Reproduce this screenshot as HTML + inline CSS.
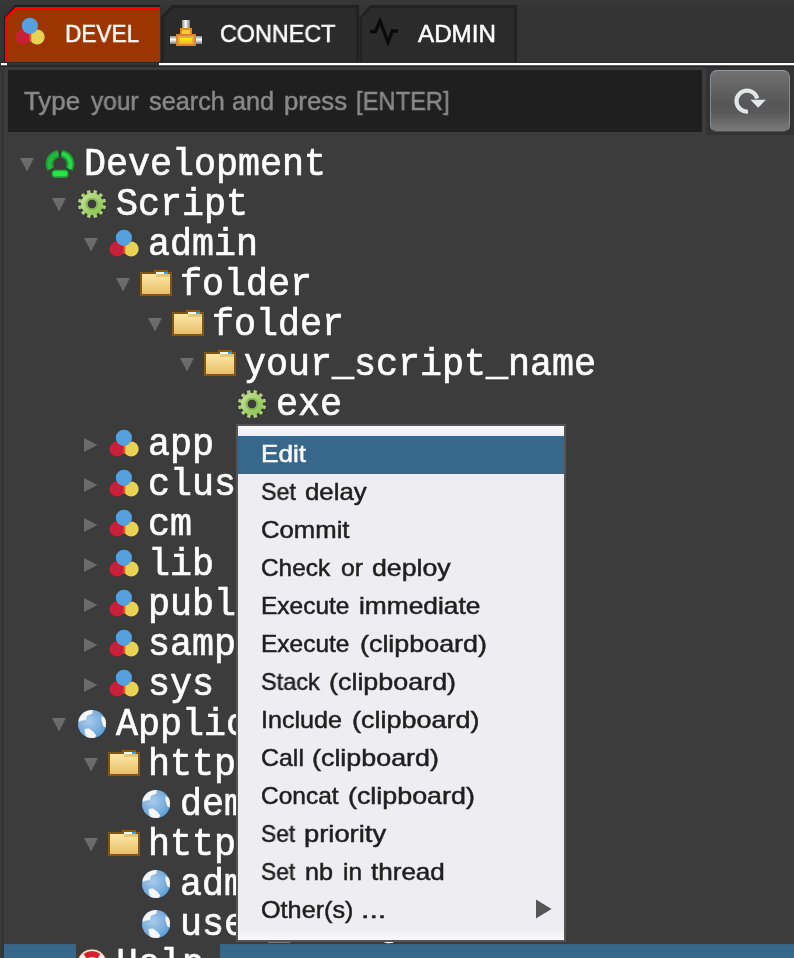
<!DOCTYPE html>
<html><head><meta charset="utf-8"><title>tree</title>
<style>
html,body{margin:0;padding:0;overflow:hidden}
#app{position:absolute;left:0;top:0;width:794px;height:958px;overflow:hidden;background:#3c3c3c}
body{width:794px;height:958px;overflow:hidden;background:#3c3c3c;position:relative;font-family:"Liberation Sans", sans-serif;}
.t{will-change:transform;position:absolute;white-space:pre;transform-origin:0 0;display:block;}
.s{font-family:"Liberation Sans", sans-serif;-webkit-text-stroke:0.5px currentColor}
.m{font-family:"Liberation Mono", monospace}
.b{filter:blur(0.45px)}
.i{position:absolute;display:block;overflow:visible}
#edge{position:absolute;left:0;top:0;width:4px;height:958px;background:#343434;border-left:1px solid #3b3b3b;box-sizing:border-box}
#menu{position:absolute;left:236px;top:424px;width:326px;height:514px;border:2px solid #555;background:linear-gradient(#fafafc 0,#ededf2 10px,#ededf2 502px,#f9f9fb 514px);}
#menu>div{position:absolute;left:0;width:326px;height:38px;}
#menu>div.sel{background:#38678c;}
#btn{position:absolute;left:710px;top:70px;width:78px;height:60px;border-radius:7px;border:1px solid #858b91;border-top-color:#949aa0;border-bottom-color:#4e5258;background:linear-gradient(#717171 0,#565656 55%,#5a5a5a 70%,#7b7b7b 100%);overflow:hidden}
</style></head><body><div id="app">
<div id="edge"></div>
<svg class="i" style="left:0;top:0" width="794" height="70" viewBox="0 0 794 70">
<rect x="0" y="0" width="794" height="70" fill="#343434"/>
<rect x="0" y="0" width="794" height="5" fill="#373737"/>
<!-- inactive tabs -->
<path d="M161 62V17L172 5H359V62z" fill="#212121"/>
<path d="M163.5 62V18L173 8H356.5V62z" fill="#2b2b2b"/>
<path d="M359.5 62V17L370.500 5H517V62z" fill="#212121"/>
<path d="M362 62V18L371.5 8H514.500V62z" fill="#2b2b2b"/>
<!-- active tab -->
<path d="M4 62V17L15 5H160V62z" fill="#1a2020"/>
<path d="M5 62V17.500L15.500 7H160V62z" fill="#ff0000"/>
<path d="M7.300 62V18.500L16.500 9.300H160V62z" fill="#9c3500"/>
<rect x="0" y="62" width="794" height="1" fill="#2a2a2a"/>
<rect x="1" y="63" width="6" height="2.500" fill="#ffffff"/>
<rect x="159" y="63" width="635" height="2.500" fill="#ffffff"/>
<rect x="0" y="65.500" width="794" height="1.500" fill="#252525"/>
<rect x="0" y="67" width="794" height="3" fill="#3a3a3a"/>
</svg>
<svg class="i b" style="left:14px;top:16px" width="32" height="32" viewBox="0 0 32 32"><circle cx="9.100" cy="21" r="7.600" fill="#c9203a"/><circle cx="23.200" cy="21" r="7.500" fill="#e8d253"/><rect x="15.400" y="16" width="1.900" height="10" rx="0.9" fill="#dc5a2c"/><circle cx="15.900" cy="9.800" r="8.100" fill="#55a0de"/></svg>
<svg class="i" style="left:168px;top:16px" width="36" height="32" viewBox="168 16 36 32">
<defs><linearGradient id="pg" x1="0" y1="0" x2="1" y2="0"><stop offset="0" stop-color="#8a8a8a"/><stop offset=".45" stop-color="#ffffff"/><stop offset="1" stop-color="#7a7a7a"/></linearGradient>
<linearGradient id="pv" x1="0" y1="0" x2="0" y2="1"><stop offset="0" stop-color="#8a8a8a"/><stop offset=".45" stop-color="#ffffff"/><stop offset="1" stop-color="#7a7a7a"/></linearGradient>
<linearGradient id="yb" x1="0" y1="0" x2="0" y2="1"><stop offset="0" stop-color="#f6f010"/><stop offset="1" stop-color="#f6b020"/></linearGradient></defs>
<rect x="182" y="20" width="8" height="8" fill="url(#pg)"/>
<rect x="170" y="36" width="6" height="8" fill="url(#pv)"/><rect x="196" y="36" width="6" height="8" fill="url(#pv)"/>
<rect x="180" y="28" width="12" height="6" fill="#e08a2c"/><rect x="182" y="30" width="8" height="4" fill="#f6cc30"/>
<rect x="176" y="34" width="20" height="12" fill="#e0842a"/><rect x="178" y="36" width="16" height="8" fill="#e8a850"/><rect x="180" y="38" width="12" height="6" fill="url(#yb)"/>
</svg>
<svg class="i" style="left:366px;top:16px" width="36" height="32" viewBox="366 16 36 32"><path d="M370 31.500H375.500L380 21L388 42L392.500 31H398" fill="none" stroke="#0a0a0a" stroke-width="3.3" stroke-linejoin="miter"/></svg>
<span class="t s" style="left:65.20px;top:22.08px;font-size:24px;line-height:24px;color:#fff;transform:scale(0.9436,1.0000);">DEVEL</span>
<span class="t s" style="left:220.30px;top:22.08px;font-size:24px;line-height:24px;color:#fff;transform:scale(0.9720,1.0000);">CONNECT</span>
<span class="t s" style="left:418.30px;top:22.08px;font-size:24px;line-height:24px;color:#fff;transform:scale(1.0080,1.0000);">ADMIN</span>
<div style="position:absolute;left:706px;top:67px;width:88px;height:68px;background:#333"></div>
<div style="position:absolute;left:8px;top:70px;width:694px;height:62px;background:#1f1f1f"></div>
<span class="t s" style="left:23.62px;top:89.44px;font-size:25px;line-height:25px;color:#888;transform:scale(1.0347,1.0000);">Type</span>
<span class="t s" style="left:91.30px;top:89.44px;font-size:25px;line-height:25px;color:#888;transform:scale(0.9767,1.0000);">your</span>
<span class="t s" style="left:148.72px;top:89.44px;font-size:25px;line-height:25px;color:#888;transform:scale(1.0102,1.0000);">search</span>
<span class="t s" style="left:232.09px;top:89.44px;font-size:25px;line-height:25px;color:#888;transform:scale(1.0089,1.0000);">and</span>
<span class="t s" style="left:283.99px;top:89.44px;font-size:25px;line-height:25px;color:#888;transform:scale(1.0320,1.0000);">press</span>
<span class="t s" style="left:355.88px;top:89.44px;font-size:25px;line-height:25px;color:#888;transform:scale(0.9499,1.0000);">[ENTER]</span>
<div id="btn"><svg width="80" height="62" viewBox="710 70 80 62" style="position:absolute;left:-1px;top:-1px"><path d="M747.9 111.5A10.5 10.5 0 1 1 757.2 98.6" fill="none" stroke="#e2e6e6" stroke-width="4.2"/><path d="M750.4 99.8H765.9L758.2 107.8z" fill="#e2e6e6"/></svg></div>
<svg class="i" style="left:20px;top:158px" width="14" height="14" viewBox="0 0 14 14"><path d="M0 0H14L7 13.5z" fill="#6b6b6b"/></svg>
<svg class="i b" style="left:44px;top:148px" width="32" height="32" viewBox="0 0 32 32"><g fill="none" stroke="#1c9f33" stroke-width="7.6"><path d="M14.36 5.63 A10.5 10.5 0 0 0 6.73 20.93"/><path d="M17.64 5.63 A10.5 10.5 0 0 1 25.27 20.93"/></g><g fill="none" stroke-width="4"><path stroke="#22bb3c" d="M14.36 5.63 A10.5 10.5 0 0 0 6.73 20.93"/><path stroke="#24d944" d="M17.64 5.63 A10.5 10.5 0 0 1 25.27 20.93"/></g><rect x="7.8" y="21.8" width="16.6" height="8" rx="3.5" fill="#1fae38"/><rect x="9" y="23.3" width="14.2" height="4.6" rx="2.2" fill="#25e648"/></svg>
<span class="t m" style="left:84.00px;top:146.14px;font-size:36.66px;line-height:36.66px;color:#fff;transform:scale(1.0000,1.0450);-webkit-text-stroke:0.65px #fff;">Development</span>
<svg class="i" style="left:52px;top:198px" width="14" height="14" viewBox="0 0 14 14"><path d="M0 0H14L7 13.5z" fill="#6b6b6b"/></svg>
<svg class="i b" style="left:76px;top:188px" width="32" height="32" viewBox="0 0 32 32"><defs><linearGradient id="gg" x1="0" y1="0" x2="1" y2="1"><stop offset="0" stop-color="#c6e39a"/><stop offset="1" stop-color="#86bf4c"/></linearGradient></defs><g fill="url(#gg)"><rect x="14.3" y="2" width="3.4" height="5" transform="rotate(15 16 16)"/><rect x="14.3" y="2" width="3.4" height="5" transform="rotate(45 16 16)"/><rect x="14.3" y="2" width="3.4" height="5" transform="rotate(75 16 16)"/><rect x="14.3" y="2" width="3.4" height="5" transform="rotate(105 16 16)"/><rect x="14.3" y="2" width="3.4" height="5" transform="rotate(135 16 16)"/><rect x="14.3" y="2" width="3.4" height="5" transform="rotate(165 16 16)"/><rect x="14.3" y="2" width="3.4" height="5" transform="rotate(195 16 16)"/><rect x="14.3" y="2" width="3.4" height="5" transform="rotate(225 16 16)"/><rect x="14.3" y="2" width="3.4" height="5" transform="rotate(255 16 16)"/><rect x="14.3" y="2" width="3.4" height="5" transform="rotate(285 16 16)"/><rect x="14.3" y="2" width="3.4" height="5" transform="rotate(315 16 16)"/><rect x="14.3" y="2" width="3.4" height="5" transform="rotate(345 16 16)"/><path fill-rule="evenodd" d="M16 5a11 11 0 1 0 0 22a11 11 0 1 0 0 -22zM16 11.5a4.5 4.5 0 1 1 0 9a4.5 4.5 0 1 1 0 -9z"/></g><circle cx="16" cy="16" r="5.5" fill="none" stroke="#7fb048" stroke-width="1.6" opacity=".8"/></svg>
<span class="t m" style="left:116.00px;top:186.14px;font-size:36.66px;line-height:36.66px;color:#fff;transform:scale(1.0000,1.0450);-webkit-text-stroke:0.65px #fff;">Script</span>
<svg class="i" style="left:84px;top:238px" width="14" height="14" viewBox="0 0 14 14"><path d="M0 0H14L7 13.5z" fill="#6b6b6b"/></svg>
<svg class="i b" style="left:108px;top:228px" width="32" height="32" viewBox="0 0 32 32"><circle cx="9.100" cy="21" r="7.600" fill="#c9203a"/><circle cx="23.200" cy="21" r="7.500" fill="#e8d253"/><rect x="15.400" y="16" width="1.900" height="10" rx="0.9" fill="#dc5a2c"/><circle cx="15.900" cy="9.800" r="8.100" fill="#55a0de"/></svg>
<span class="t m" style="left:148.00px;top:226.14px;font-size:36.66px;line-height:36.66px;color:#fff;transform:scale(1.0000,1.0450);-webkit-text-stroke:0.65px #fff;">admin</span>
<svg class="i" style="left:116px;top:278px" width="14" height="14" viewBox="0 0 14 14"><path d="M0 0H14L7 13.5z" fill="#6b6b6b"/></svg>
<svg class="i b" style="left:140px;top:267px" width="32" height="32" viewBox="0 0 32 32"><defs><linearGradient id="fg" x1="0" y1="0" x2="0" y2="1"><stop offset="0" stop-color="#fdeaa8"/><stop offset="1" stop-color="#e6bd6a"/></linearGradient></defs><rect x="14" y="3" width="14" height="4" fill="#8a5b0f"/><rect x="1" y="6" width="30" height="22" fill="url(#fg)" stroke="#83570f" stroke-width="2"/><rect x="16" y="5" width="8" height="2.2" fill="#f4f6f8"/><rect x="24" y="5" width="4" height="2.2" fill="#2aa5ee"/><rect x="16" y="7.2" width="14" height="2.6" fill="#e8c47a"/></svg>
<span class="t m" style="left:180.00px;top:266.14px;font-size:36.66px;line-height:36.66px;color:#fff;transform:scale(1.0000,1.0450);-webkit-text-stroke:0.65px #fff;">folder</span>
<svg class="i" style="left:148px;top:318px" width="14" height="14" viewBox="0 0 14 14"><path d="M0 0H14L7 13.5z" fill="#6b6b6b"/></svg>
<svg class="i b" style="left:172px;top:307px" width="32" height="32" viewBox="0 0 32 32"><defs><linearGradient id="fg" x1="0" y1="0" x2="0" y2="1"><stop offset="0" stop-color="#fdeaa8"/><stop offset="1" stop-color="#e6bd6a"/></linearGradient></defs><rect x="14" y="3" width="14" height="4" fill="#8a5b0f"/><rect x="1" y="6" width="30" height="22" fill="url(#fg)" stroke="#83570f" stroke-width="2"/><rect x="16" y="5" width="8" height="2.2" fill="#f4f6f8"/><rect x="24" y="5" width="4" height="2.2" fill="#2aa5ee"/><rect x="16" y="7.2" width="14" height="2.6" fill="#e8c47a"/></svg>
<span class="t m" style="left:212.00px;top:306.14px;font-size:36.66px;line-height:36.66px;color:#fff;transform:scale(1.0000,1.0450);-webkit-text-stroke:0.65px #fff;">folder</span>
<svg class="i" style="left:180px;top:358px" width="14" height="14" viewBox="0 0 14 14"><path d="M0 0H14L7 13.5z" fill="#6b6b6b"/></svg>
<svg class="i b" style="left:204px;top:347px" width="32" height="32" viewBox="0 0 32 32"><defs><linearGradient id="fg" x1="0" y1="0" x2="0" y2="1"><stop offset="0" stop-color="#fdeaa8"/><stop offset="1" stop-color="#e6bd6a"/></linearGradient></defs><rect x="14" y="3" width="14" height="4" fill="#8a5b0f"/><rect x="1" y="6" width="30" height="22" fill="url(#fg)" stroke="#83570f" stroke-width="2"/><rect x="16" y="5" width="8" height="2.2" fill="#f4f6f8"/><rect x="24" y="5" width="4" height="2.2" fill="#2aa5ee"/><rect x="16" y="7.2" width="14" height="2.6" fill="#e8c47a"/></svg>
<span class="t m" style="left:244.00px;top:346.14px;font-size:36.66px;line-height:36.66px;color:#fff;transform:scale(1.0000,1.0450);-webkit-text-stroke:0.65px #fff;">your_script_name</span>
<svg class="i b" style="left:236px;top:388px" width="32" height="32" viewBox="0 0 32 32"><defs><linearGradient id="gg" x1="0" y1="0" x2="1" y2="1"><stop offset="0" stop-color="#c6e39a"/><stop offset="1" stop-color="#86bf4c"/></linearGradient></defs><g fill="url(#gg)"><rect x="14.3" y="2" width="3.4" height="5" transform="rotate(15 16 16)"/><rect x="14.3" y="2" width="3.4" height="5" transform="rotate(45 16 16)"/><rect x="14.3" y="2" width="3.4" height="5" transform="rotate(75 16 16)"/><rect x="14.3" y="2" width="3.4" height="5" transform="rotate(105 16 16)"/><rect x="14.3" y="2" width="3.4" height="5" transform="rotate(135 16 16)"/><rect x="14.3" y="2" width="3.4" height="5" transform="rotate(165 16 16)"/><rect x="14.3" y="2" width="3.4" height="5" transform="rotate(195 16 16)"/><rect x="14.3" y="2" width="3.4" height="5" transform="rotate(225 16 16)"/><rect x="14.3" y="2" width="3.4" height="5" transform="rotate(255 16 16)"/><rect x="14.3" y="2" width="3.4" height="5" transform="rotate(285 16 16)"/><rect x="14.3" y="2" width="3.4" height="5" transform="rotate(315 16 16)"/><rect x="14.3" y="2" width="3.4" height="5" transform="rotate(345 16 16)"/><path fill-rule="evenodd" d="M16 5a11 11 0 1 0 0 22a11 11 0 1 0 0 -22zM16 11.5a4.5 4.5 0 1 1 0 9a4.5 4.5 0 1 1 0 -9z"/></g><circle cx="16" cy="16" r="5.5" fill="none" stroke="#7fb048" stroke-width="1.6" opacity=".8"/></svg>
<span class="t m" style="left:276.00px;top:386.14px;font-size:36.66px;line-height:36.66px;color:#fff;transform:scale(1.0000,1.0450);-webkit-text-stroke:0.65px #fff;">exe</span>
<svg class="i" style="left:84px;top:438px" width="14" height="14" viewBox="0 0 14 14"><path d="M0 0V14L13.5 7z" fill="#6b6b6b"/></svg>
<svg class="i b" style="left:108px;top:428px" width="32" height="32" viewBox="0 0 32 32"><circle cx="9.100" cy="21" r="7.600" fill="#c9203a"/><circle cx="23.200" cy="21" r="7.500" fill="#e8d253"/><rect x="15.400" y="16" width="1.900" height="10" rx="0.9" fill="#dc5a2c"/><circle cx="15.900" cy="9.800" r="8.100" fill="#55a0de"/></svg>
<span class="t m" style="left:148.00px;top:426.14px;font-size:36.66px;line-height:36.66px;color:#fff;transform:scale(1.0000,1.0450);-webkit-text-stroke:0.65px #fff;">app</span>
<svg class="i" style="left:84px;top:478px" width="14" height="14" viewBox="0 0 14 14"><path d="M0 0V14L13.5 7z" fill="#6b6b6b"/></svg>
<svg class="i b" style="left:108px;top:468px" width="32" height="32" viewBox="0 0 32 32"><circle cx="9.100" cy="21" r="7.600" fill="#c9203a"/><circle cx="23.200" cy="21" r="7.500" fill="#e8d253"/><rect x="15.400" y="16" width="1.900" height="10" rx="0.9" fill="#dc5a2c"/><circle cx="15.900" cy="9.800" r="8.100" fill="#55a0de"/></svg>
<span class="t m" style="left:148.00px;top:466.14px;font-size:36.66px;line-height:36.66px;color:#fff;transform:scale(1.0000,1.0450);-webkit-text-stroke:0.65px #fff;">cluster</span>
<svg class="i" style="left:84px;top:518px" width="14" height="14" viewBox="0 0 14 14"><path d="M0 0V14L13.5 7z" fill="#6b6b6b"/></svg>
<svg class="i b" style="left:108px;top:508px" width="32" height="32" viewBox="0 0 32 32"><circle cx="9.100" cy="21" r="7.600" fill="#c9203a"/><circle cx="23.200" cy="21" r="7.500" fill="#e8d253"/><rect x="15.400" y="16" width="1.900" height="10" rx="0.9" fill="#dc5a2c"/><circle cx="15.900" cy="9.800" r="8.100" fill="#55a0de"/></svg>
<span class="t m" style="left:148.00px;top:506.14px;font-size:36.66px;line-height:36.66px;color:#fff;transform:scale(1.0000,1.0450);-webkit-text-stroke:0.65px #fff;">cm</span>
<svg class="i" style="left:84px;top:558px" width="14" height="14" viewBox="0 0 14 14"><path d="M0 0V14L13.5 7z" fill="#6b6b6b"/></svg>
<svg class="i b" style="left:108px;top:548px" width="32" height="32" viewBox="0 0 32 32"><circle cx="9.100" cy="21" r="7.600" fill="#c9203a"/><circle cx="23.200" cy="21" r="7.500" fill="#e8d253"/><rect x="15.400" y="16" width="1.900" height="10" rx="0.9" fill="#dc5a2c"/><circle cx="15.900" cy="9.800" r="8.100" fill="#55a0de"/></svg>
<span class="t m" style="left:148.00px;top:546.14px;font-size:36.66px;line-height:36.66px;color:#fff;transform:scale(1.0000,1.0450);-webkit-text-stroke:0.65px #fff;">lib</span>
<svg class="i" style="left:84px;top:598px" width="14" height="14" viewBox="0 0 14 14"><path d="M0 0V14L13.5 7z" fill="#6b6b6b"/></svg>
<svg class="i b" style="left:108px;top:588px" width="32" height="32" viewBox="0 0 32 32"><circle cx="9.100" cy="21" r="7.600" fill="#c9203a"/><circle cx="23.200" cy="21" r="7.500" fill="#e8d253"/><rect x="15.400" y="16" width="1.900" height="10" rx="0.9" fill="#dc5a2c"/><circle cx="15.900" cy="9.800" r="8.100" fill="#55a0de"/></svg>
<span class="t m" style="left:148.00px;top:586.14px;font-size:36.66px;line-height:36.66px;color:#fff;transform:scale(1.0000,1.0450);-webkit-text-stroke:0.65px #fff;">public</span>
<svg class="i" style="left:84px;top:638px" width="14" height="14" viewBox="0 0 14 14"><path d="M0 0V14L13.5 7z" fill="#6b6b6b"/></svg>
<svg class="i b" style="left:108px;top:628px" width="32" height="32" viewBox="0 0 32 32"><circle cx="9.100" cy="21" r="7.600" fill="#c9203a"/><circle cx="23.200" cy="21" r="7.500" fill="#e8d253"/><rect x="15.400" y="16" width="1.900" height="10" rx="0.9" fill="#dc5a2c"/><circle cx="15.900" cy="9.800" r="8.100" fill="#55a0de"/></svg>
<span class="t m" style="left:148.00px;top:626.14px;font-size:36.66px;line-height:36.66px;color:#fff;transform:scale(1.0000,1.0450);-webkit-text-stroke:0.65px #fff;">sample</span>
<svg class="i" style="left:84px;top:678px" width="14" height="14" viewBox="0 0 14 14"><path d="M0 0V14L13.5 7z" fill="#6b6b6b"/></svg>
<svg class="i b" style="left:108px;top:668px" width="32" height="32" viewBox="0 0 32 32"><circle cx="9.100" cy="21" r="7.600" fill="#c9203a"/><circle cx="23.200" cy="21" r="7.500" fill="#e8d253"/><rect x="15.400" y="16" width="1.900" height="10" rx="0.9" fill="#dc5a2c"/><circle cx="15.900" cy="9.800" r="8.100" fill="#55a0de"/></svg>
<span class="t m" style="left:148.00px;top:666.14px;font-size:36.66px;line-height:36.66px;color:#fff;transform:scale(1.0000,1.0450);-webkit-text-stroke:0.65px #fff;">sys</span>
<svg class="i" style="left:52px;top:718px" width="14" height="14" viewBox="0 0 14 14"><path d="M0 0H14L7 13.5z" fill="#6b6b6b"/></svg>
<svg class="i b" style="left:76px;top:708px" width="32" height="32" viewBox="0 0 32 32"><defs><radialGradient id="gl" cx=".4" cy=".4" r=".7"><stop offset="0" stop-color="#aacbea"/><stop offset="1" stop-color="#5a9bd5"/></radialGradient><clipPath id="gc"><circle cx="16" cy="16" r="14"/></clipPath></defs><circle cx="16" cy="16" r="14" fill="url(#gl)"/><g clip-path="url(#gc)" fill="#f3f5f8"><path d="M2 10 L7 3 L17 1.500 L16.500 5.500 L11 8 L10 12 L6 12.500 L3 14z"/><path d="M25.500 8 L31 11 L31 20 L27.500 18.500 L25.500 13z"/><path d="M8.500 21 L13 20.500 L17 23.500 L20 27 L19 31 L11 30 L9 26z"/></g></svg>
<span class="t m" style="left:116.00px;top:706.14px;font-size:36.66px;line-height:36.66px;color:#fff;transform:scale(1.0000,1.0450);-webkit-text-stroke:0.65px #fff;">Application</span>
<svg class="i" style="left:84px;top:758px" width="14" height="14" viewBox="0 0 14 14"><path d="M0 0H14L7 13.5z" fill="#6b6b6b"/></svg>
<svg class="i b" style="left:108px;top:747px" width="32" height="32" viewBox="0 0 32 32"><defs><linearGradient id="fg" x1="0" y1="0" x2="0" y2="1"><stop offset="0" stop-color="#fdeaa8"/><stop offset="1" stop-color="#e6bd6a"/></linearGradient></defs><rect x="14" y="3" width="14" height="4" fill="#8a5b0f"/><rect x="1" y="6" width="30" height="22" fill="url(#fg)" stroke="#83570f" stroke-width="2"/><rect x="16" y="5" width="8" height="2.2" fill="#f4f6f8"/><rect x="24" y="5" width="4" height="2.2" fill="#2aa5ee"/><rect x="16" y="7.2" width="14" height="2.6" fill="#e8c47a"/></svg>
<span class="t m" style="left:148.00px;top:746.14px;font-size:36.66px;line-height:36.66px;color:#fff;transform:scale(1.0000,1.0450);-webkit-text-stroke:0.65px #fff;">http</span>
<svg class="i b" style="left:140px;top:788px" width="32" height="32" viewBox="0 0 32 32"><defs><radialGradient id="gl" cx=".4" cy=".4" r=".7"><stop offset="0" stop-color="#aacbea"/><stop offset="1" stop-color="#5a9bd5"/></radialGradient><clipPath id="gc"><circle cx="16" cy="16" r="14"/></clipPath></defs><circle cx="16" cy="16" r="14" fill="url(#gl)"/><g clip-path="url(#gc)" fill="#f3f5f8"><path d="M2 10 L7 3 L17 1.500 L16.500 5.500 L11 8 L10 12 L6 12.500 L3 14z"/><path d="M25.500 8 L31 11 L31 20 L27.500 18.500 L25.500 13z"/><path d="M8.500 21 L13 20.500 L17 23.500 L20 27 L19 31 L11 30 L9 26z"/></g></svg>
<span class="t m" style="left:180.00px;top:786.14px;font-size:36.66px;line-height:36.66px;color:#fff;transform:scale(1.0000,1.0450);-webkit-text-stroke:0.65px #fff;">demo</span>
<svg class="i" style="left:84px;top:838px" width="14" height="14" viewBox="0 0 14 14"><path d="M0 0H14L7 13.5z" fill="#6b6b6b"/></svg>
<svg class="i b" style="left:108px;top:827px" width="32" height="32" viewBox="0 0 32 32"><defs><linearGradient id="fg" x1="0" y1="0" x2="0" y2="1"><stop offset="0" stop-color="#fdeaa8"/><stop offset="1" stop-color="#e6bd6a"/></linearGradient></defs><rect x="14" y="3" width="14" height="4" fill="#8a5b0f"/><rect x="1" y="6" width="30" height="22" fill="url(#fg)" stroke="#83570f" stroke-width="2"/><rect x="16" y="5" width="8" height="2.2" fill="#f4f6f8"/><rect x="24" y="5" width="4" height="2.2" fill="#2aa5ee"/><rect x="16" y="7.2" width="14" height="2.6" fill="#e8c47a"/></svg>
<span class="t m" style="left:148.00px;top:826.14px;font-size:36.66px;line-height:36.66px;color:#fff;transform:scale(1.0000,1.0450);-webkit-text-stroke:0.65px #fff;">http</span>
<svg class="i b" style="left:140px;top:868px" width="32" height="32" viewBox="0 0 32 32"><defs><radialGradient id="gl" cx=".4" cy=".4" r=".7"><stop offset="0" stop-color="#aacbea"/><stop offset="1" stop-color="#5a9bd5"/></radialGradient><clipPath id="gc"><circle cx="16" cy="16" r="14"/></clipPath></defs><circle cx="16" cy="16" r="14" fill="url(#gl)"/><g clip-path="url(#gc)" fill="#f3f5f8"><path d="M2 10 L7 3 L17 1.500 L16.500 5.500 L11 8 L10 12 L6 12.500 L3 14z"/><path d="M25.500 8 L31 11 L31 20 L27.500 18.500 L25.500 13z"/><path d="M8.500 21 L13 20.500 L17 23.500 L20 27 L19 31 L11 30 L9 26z"/></g></svg>
<span class="t m" style="left:180.00px;top:866.14px;font-size:36.66px;line-height:36.66px;color:#fff;transform:scale(1.0000,1.0450);-webkit-text-stroke:0.65px #fff;">admin</span>
<svg class="i b" style="left:140px;top:908px" width="32" height="32" viewBox="0 0 32 32"><defs><radialGradient id="gl" cx=".4" cy=".4" r=".7"><stop offset="0" stop-color="#aacbea"/><stop offset="1" stop-color="#5a9bd5"/></radialGradient><clipPath id="gc"><circle cx="16" cy="16" r="14"/></clipPath></defs><circle cx="16" cy="16" r="14" fill="url(#gl)"/><g clip-path="url(#gc)" fill="#f3f5f8"><path d="M2 10 L7 3 L17 1.500 L16.500 5.500 L11 8 L10 12 L6 12.500 L3 14z"/><path d="M25.500 8 L31 11 L31 20 L27.500 18.500 L25.500 13z"/><path d="M8.500 21 L13 20.500 L17 23.500 L20 27 L19 31 L11 30 L9 26z"/></g></svg>
<span class="t m" style="left:180.00px;top:906.14px;font-size:36.66px;line-height:36.66px;color:#fff;transform:scale(1.0000,1.0450);-webkit-text-stroke:0.65px #fff;">user_manager</span>
<div style="position:absolute;left:4px;top:944px;width:72px;height:40px;background:linear-gradient(#3a5f7c 0,#38678c 1px)"></div>
<div style="position:absolute;left:220px;top:944px;width:574px;height:40px;background:linear-gradient(#3a5f7c 0,#38678c 1px)"></div>
<svg class="i b" style="left:76px;top:948px" width="32" height="32" viewBox="0 0 32 32"><circle cx="16" cy="16" r="15" fill="#ececec" stroke="#6a4c1c" stroke-width="1.200"/><path d="M7.500 6 A13.500 13.500 0 0 1 24.500 6 L21 11 A7 7 0 0 0 11 11z" fill="#d8202c"/><circle cx="16" cy="16" r="6" fill="#3c3c3c"/></svg>
<span class="t m" style="left:116.00px;top:946.14px;font-size:36.66px;line-height:36.66px;color:#fff;transform:scale(1.0000,1.0450);-webkit-text-stroke:0.65px #fff;">Help</span>
<div id="menu">
<div class="sel" style="top:10px"><span class="t s" style="left:23.42px;top:5.88px;font-size:24px;line-height:24px;color:#fff;transform:scale(1.0880,1.0000);">Edit</span></div>
<div style="top:48px"><span class="t s" style="left:23.37px;top:5.88px;font-size:24px;line-height:24px;color:#1f1f1f;transform:scale(0.9703,1.0000);">Set</span><span class="t s" style="left:66.67px;top:5.88px;font-size:24px;line-height:24px;color:#1f1f1f;transform:scale(1.0756,1.0000);">delay</span></div>
<div style="top:86px"><span class="t s" style="left:23.22px;top:5.88px;font-size:24px;line-height:24px;color:#1f1f1f;transform:scale(1.0707,1.0000);">Commit</span></div>
<div style="top:124px"><span class="t s" style="left:23.01px;top:5.88px;font-size:24px;line-height:24px;color:#1f1f1f;transform:scale(1.0161,1.0000);">Check</span><span class="t s" style="left:102.74px;top:5.88px;font-size:24px;line-height:24px;color:#1f1f1f;transform:scale(1.0287,1.0000);">or</span><span class="t s" style="left:134.45px;top:5.88px;font-size:24px;line-height:24px;color:#1f1f1f;transform:scale(1.1129,1.0000);">deploy</span></div>
<div style="top:162px"><span class="t s" style="left:23.12px;top:5.88px;font-size:24px;line-height:24px;color:#1f1f1f;transform:scale(1.0200,1.0000);">Execute</span><span class="t s" style="left:121.02px;top:5.88px;font-size:24px;line-height:24px;color:#1f1f1f;transform:scale(1.0967,1.0000);">immediate</span></div>
<div style="top:200px"><span class="t s" style="left:23.12px;top:5.88px;font-size:24px;line-height:24px;color:#1f1f1f;transform:scale(1.0200,1.0000);">Execute</span><span class="t s" style="left:121.57px;top:5.88px;font-size:24px;line-height:24px;color:#1f1f1f;transform:scale(1.1199,1.0000);">(clipboard)</span></div>
<div style="top:238px"><span class="t s" style="left:22.77px;top:5.88px;font-size:24px;line-height:24px;color:#1f1f1f;transform:scale(0.9791,1.0000);">Stack</span><span class="t s" style="left:91.33px;top:5.88px;font-size:24px;line-height:24px;color:#1f1f1f;transform:scale(1.1206,1.0000);">(clipboard)</span></div>
<div style="top:276px"><span class="t s" style="left:22.82px;top:5.88px;font-size:24px;line-height:24px;color:#1f1f1f;transform:scale(1.0457,1.0000);">Include</span><span class="t s" style="left:113.59px;top:5.88px;font-size:24px;line-height:24px;color:#1f1f1f;transform:scale(1.1239,1.0000);">(clipboard)</span></div>
<div style="top:314px"><span class="t s" style="left:22.88px;top:5.88px;font-size:24px;line-height:24px;color:#1f1f1f;transform:scale(1.0384,1.0000);">Call</span><span class="t s" style="left:73.82px;top:5.88px;font-size:24px;line-height:24px;color:#1f1f1f;transform:scale(1.1193,1.0000);">(clipboard)</span></div>
<div style="top:352px"><span class="t s" style="left:23.01px;top:5.88px;font-size:24px;line-height:24px;color:#1f1f1f;transform:scale(1.0198,1.0000);">Concat</span><span class="t s" style="left:110.05px;top:5.88px;font-size:24px;line-height:24px;color:#1f1f1f;transform:scale(1.1191,1.0000);">(clipboard)</span></div>
<div style="top:390px"><span class="t s" style="left:22.95px;top:5.88px;font-size:24px;line-height:24px;color:#1f1f1f;transform:scale(0.9508,1.0000);">Set</span><span class="t s" style="left:66.42px;top:5.88px;font-size:24px;line-height:24px;color:#1f1f1f;transform:scale(1.1398,1.0000);">priority</span></div>
<div style="top:428px"><span class="t s" style="left:22.95px;top:5.88px;font-size:24px;line-height:24px;color:#1f1f1f;transform:scale(0.9508,1.0000);">Set</span><span class="t s" style="left:66.62px;top:5.88px;font-size:24px;line-height:24px;color:#1f1f1f;transform:scale(1.0489,1.0000);">nb</span><span class="t s" style="left:104.85px;top:5.88px;font-size:24px;line-height:24px;color:#1f1f1f;transform:scale(1.0171,1.0000);">in</span><span class="t s" style="left:133.04px;top:5.88px;font-size:24px;line-height:24px;color:#1f1f1f;transform:scale(1.0850,1.0000);">thread</span></div>
<div style="top:466px"><span class="t s" style="left:23.41px;top:5.88px;font-size:24px;line-height:24px;color:#1f1f1f;transform:scale(1.0506,1.0000);">Other(s)</span><span class="t s" style="left:123.31px;top:5.88px;font-size:24px;line-height:24px;color:#1f1f1f;transform:scale(1.2631,1.0000);">...</span></div>
<svg class="i" style="left:298px;top:473px" width="16" height="20" viewBox="0 0 16 20"><path d="M0 0.5V19.5L15.5 10z" fill="#555"/></svg>
</div>
<div style="position:absolute;left:268px;top:942px;width:22px;height:1px;background:#7a7a7a"></div>
</div></body></html>
